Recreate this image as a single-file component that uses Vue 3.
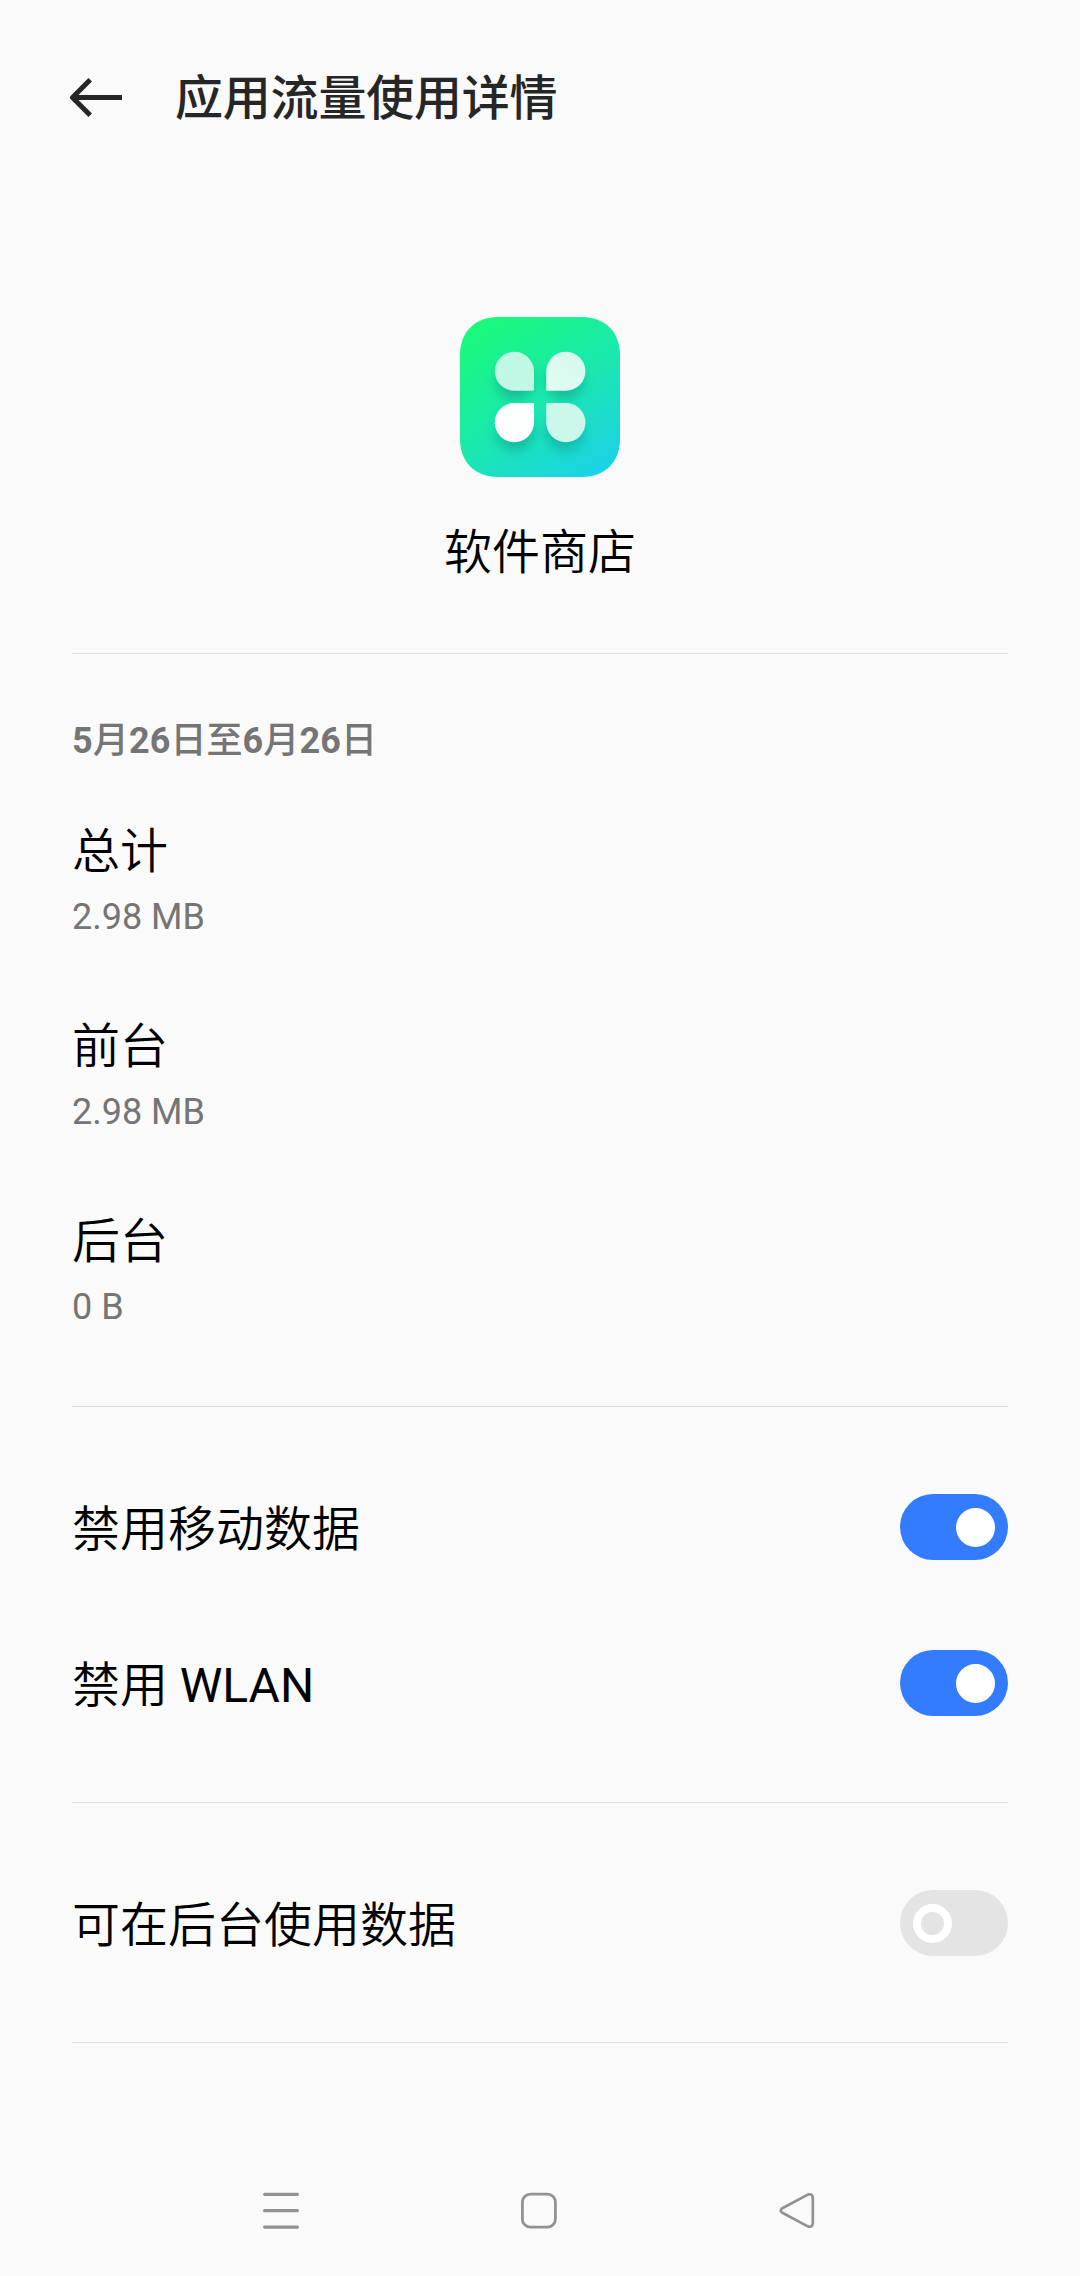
<script setup>
    import { ref } from "vue";

    const periode = ["5", "月", "26", "日至", "6", "月", "26", "日"];

    const usages = [
        { titre: "总计", valeur: "2.98 MB" },
        { titre: "前台", valeur: "2.98 MB" },
        { titre: "后台", valeur: "0 B" },
    ];

    const restrictions = ref([
        { titre: "禁用移动数据", actif: true },
        { titre: "禁用 ", suffixe: "WLAN", actif: true },
    ]);

    const arrierePlan = ref([
        { titre: "可在后台使用数据", actif: false },
    ]);

    const estNombre = (texte) => /^\d+$/.test(texte);
</script>

<template>
    <div class="page">
        <header class="entete">
            <svg class="retour" width="54" height="44" viewBox="0 0 54 44" fill="none" stroke="#262626" stroke-width="5">
                <path d="M53 20.5H4M21.2 2.8L3.5 20.5L21.2 38.2" stroke-linejoin="round" />
            </svg>
            <h1>应用流量使用详情</h1>
        </header>

        <section class="application">
            <svg class="logo" width="160" height="160" viewBox="0 0 160 160">
                <defs>
                    <linearGradient id="fond" x1="0.2" y1="0.05" x2="0.85" y2="1">
                        <stop offset="0" stop-color="#19f97f" />
                        <stop offset="0.5" stop-color="#1be8ae" />
                        <stop offset="1" stop-color="#1bd2e8" />
                    </linearGradient>
                    <linearGradient id="clair" x1="1" y1="0" x2="0" y2="1">
                        <stop offset="0" stop-color="#d2f8ec" />
                        <stop offset="1" stop-color="#e6fcf4" />
                    </linearGradient>
                    <filter id="ombre" x="-50%" y="-50%" width="200%" height="200%">
                        <feGaussianBlur stdDeviation="6" />
                    </filter>
                </defs>
                <path d="M38 0H122C145 0 160 15 160 38V122C160 145 145 160 122 160H38C15 160 0 145 0 122V38C0 15 15 0 38 0Z" fill="url(#fond)" />
                <g fill="#0b9c8c" opacity="0.6" filter="url(#ombre)">
                    <circle cx="55" cy="64" r="18" />
                    <circle cx="105" cy="64" r="18" />
                    <circle cx="55" cy="115" r="18" />
                    <circle cx="105" cy="115" r="18" />
                </g>
                <path d="M54.3 34.7A19.6 19.6 0 0 1 74 54.3V72.5Q74 73.8 72.7 73.8H54.3A19.55 19.55 0 0 1 54.3 34.7Z" fill="#c1f7e5" />
                <path d="M105.9 34.7A19.6 19.6 0 0 0 86.2 54.3V72.5Q86.2 73.8 87.5 73.8H105.9A19.55 19.55 0 0 0 105.9 34.7Z" fill="url(#clair)" />
                <path d="M54.3 125.2A19.6 19.6 0 0 0 74 105.6V87.3Q74 86 72.7 86H54.3A19.6 19.6 0 0 0 54.3 125.2Z" fill="#fdfffe" />
                <path d="M105.9 125.2A19.6 19.6 0 0 1 86.2 105.6V87.3Q86.2 86 87.5 86H105.9A19.6 19.6 0 0 1 105.9 125.2Z" fill="#cbf8eb" />
            </svg>
            <p class="nom titre">软件商店</p>
        </section>

        <section class="bloc usage">
            <h2><span v-for="(partie, index) in periode" :key="index" :class="{ nombre: estNombre(partie) }">{{ partie }}</span></h2>
            <div v-for="usage in usages" :key="usage.titre" class="ligne-usage">
                <p class="titre">{{ usage.titre }}</p>
                <p class="valeur">{{ usage.valeur }}</p>
            </div>
        </section>

        <section v-for="(groupe, index) in [restrictions, arrierePlan]" :key="index" class="bloc reglages">
            <div v-for="reglage in groupe" :key="reglage.titre" class="reglage">
                <span class="titre">{{ reglage.titre }}<span v-if="reglage.suffixe" class="latin">{{ reglage.suffixe }}</span></span>
                <button
                class="bascule" :class="{ actif: reglage.actif }" role="switch"
                :aria-checked="reglage.actif" :aria-label="reglage.titre" @click="reglage.actif = !reglage.actif">
                    <span class="pastille"></span>
                </button>
            </div>
        </section>
        <div class="bloc"></div>

        <nav class="navigation">
            <svg width="44" height="44" viewBox="0 0 44 44" fill="none" stroke="#929292" stroke-width="3.2" stroke-linecap="round">
                <path d="M5.6 5.3H38.4M5.6 21.7H38.4M5.6 38.1H38.4" />
            </svg>
            <svg width="44" height="44" viewBox="0 0 44 44" fill="none" stroke="#929292" stroke-width="2.8">
                <rect x="5.4" y="5.2" width="33" height="33" rx="8" />
            </svg>
            <svg width="44" height="44" viewBox="0 0 44 44" fill="none" stroke="#929292" stroke-width="2.7" stroke-linejoin="round">
                <path d="M6.9 19.5L32.8 5.6Q37.4 4.2 37.8 8.6V34.4Q37.4 38.8 32.8 37.4L6.9 23.5Q4.6 21.5 6.9 19.5Z" />
            </svg>
        </nav>
    </div>
</template>

<style>
    body {
        margin: 0;
        background: #fafafa;
    }
</style>

<style scoped>
    .page {
        box-sizing: border-box;
        display: flex;
        flex-direction: column;
        width: 1080px;
        height: 2276px;
        padding: 0 72px;
        overflow: hidden;
        background: #fafafa;
        color: #000;
        font-family: Roboto, "Noto Sans CJK SC", sans-serif;
        font-size: 48px;
        line-height: 72px;
    }

    h1,
    h2,
    p {
        margin: 0;
        font-size: inherit;
    }

    .entete {
        display: flex;
        align-items: center;
        height: 197px;
        margin-left: -3px;
        gap: 52px;
    }

    .entete h1 {
        color: #262626;
        font-weight: 500;
        letter-spacing: -0.2px;
    }

    .application {
        display: flex;
        flex-direction: column;
        align-items: center;
        box-sizing: border-box;
        height: 456px;
        padding-top: 120px;
    }

    .titre {
        font-weight: 350;
        white-space: pre;
    }

    .latin {
        font-weight: 400;
    }

    .nom {
        margin-top: 40px;
    }

    .bloc {
        border-top: 1px solid #dedede;
    }

    .usage {
        box-sizing: border-box;
        height: 753px;
        padding-top: 60px;
    }

    .usage h2 {
        margin-bottom: 48px;
        color: #757575;
        font-size: 36px;
        font-weight: 500;
        letter-spacing: 0.1px;
        line-height: 54px;
    }

    .nombre {
        font-weight: 700;
    }

    .ligne-usage {
        height: 195px;
    }

    .valeur {
        margin-top: 2px;
        color: #757575;
        font-size: 36px;
        line-height: 54px;
    }

    .reglages {
        padding: 42px 0 41px;
    }

    .reglage {
        display: flex;
        align-items: center;
        justify-content: space-between;
        height: 156px;
    }

    .reglage .titre {
        padding-top: 5px;
    }

    .bascule {
        display: flex;
        align-items: center;
        box-sizing: border-box;
        width: 108px;
        height: 66px;
        padding: 0 13px;
        border: none;
        border-radius: 33px;
        background: #e4e4e4;
        cursor: pointer;
    }

    .pastille {
        box-sizing: border-box;
        width: 39px;
        height: 39px;
        border: 8px solid #fff;
        border-radius: 50%;
    }

    .bascule.actif {
        justify-content: flex-end;
        background: #337cff;
    }

    .bascule.actif .pastille {
        background: #fff;
    }

    .navigation {
        display: flex;
        justify-content: space-between;
        margin-top: 146px;
        padding: 0 189px 0 187px;
    }
</style>
